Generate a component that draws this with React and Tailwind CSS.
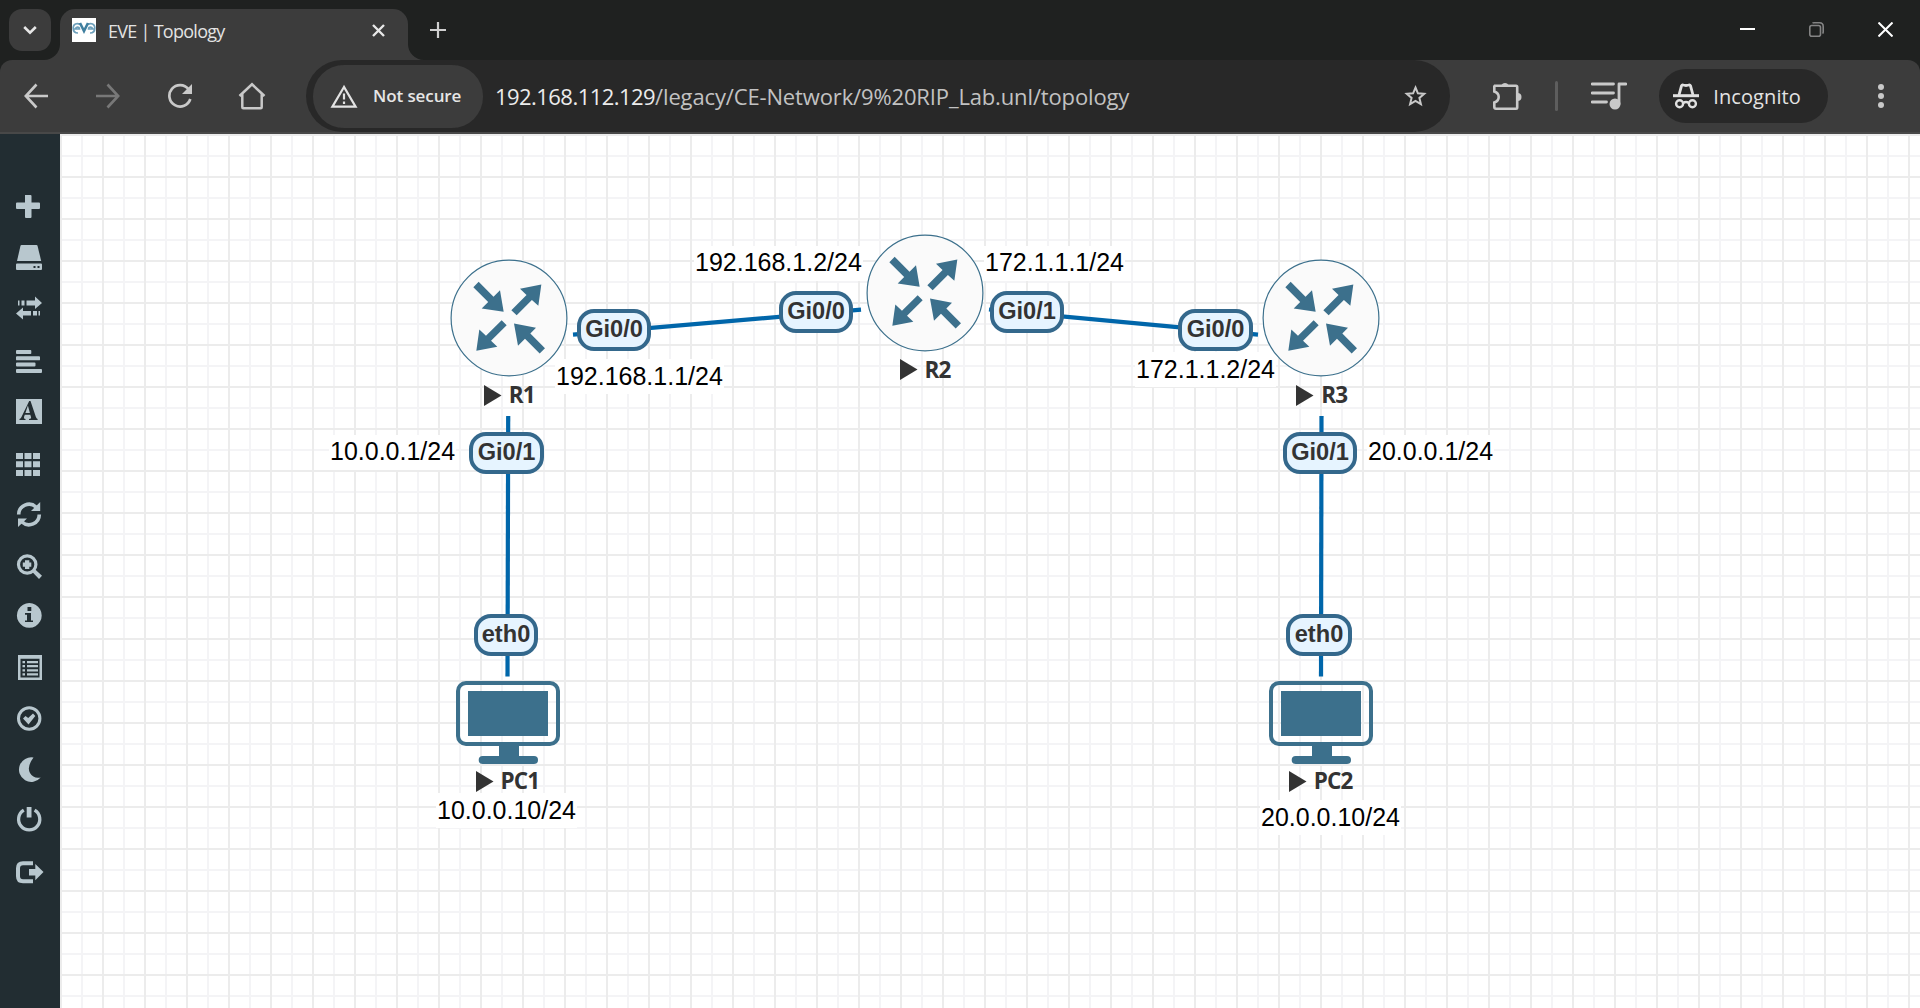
import React from "react";

const UI = "font-['Open_Sans','Noto_Sans',sans-serif]";
const ARIAL = "font-['Liberation_Sans',Arial,sans-serif]";

function TabStrip() {
  return (
    <header className="flex h-[60px] w-full items-start justify-between bg-[#1f2120] pt-[9px] pr-[27px] pl-[9px]">
      <div className="flex items-start gap-[9px]">
        <button className="flex size-[42px] items-center justify-center rounded-[13px] bg-[#3c3c3c]">
          <svg width="14" height="10" viewBox="0 0 14 10" fill="none" stroke="#e6e6e6" strokeWidth="2.6">
            <path d="M1.2 2 7 7.6 12.8 2" />
          </svg>
        </button>
        <div className="relative flex h-[51px] w-[348px] items-start justify-between rounded-t-[15px] bg-[#3c3c3c] pt-[9px] pr-[23px] pl-3">
          <svg className="absolute -left-4 bottom-0" width="16" height="16" viewBox="0 0 16 16">
            <path d="M16 0V16H0A16 16 0 0 0 16 0Z" fill="#3c3c3c" />
          </svg>
          <svg className="absolute -right-4 bottom-0" width="16" height="16" viewBox="0 0 16 16">
            <path d="M0 0V16H16A16 16 0 0 1 0 0Z" fill="#3c3c3c" />
          </svg>
          <div className="flex h-6 items-center gap-3">
            <svg width="24" height="24" viewBox="0 0 24 24" fill="none">
              <rect width="24" height="24" fill="#fff" />
              <path d="M8 6.500C5 4.500 1.200 6 1.200 10C1.200 13 3 15 6 15M2 11H7.500C7.500 8.500 4.500 8.500 3.500 10.500" stroke="#6ea0bb" strokeWidth="1.7" />
              <path d="M16 6.500C19 4.500 22.800 6 22.800 10C22.800 13 21 15 18 15M22 11H16.500C16.500 8.500 19.500 8.500 20.500 10.500" stroke="#6ea0bb" strokeWidth="1.7" />
              <path d="M8 5 12 13 16 5" stroke="#3f7f9f" strokeWidth="2.600" />
            </svg>
            <span className={`${UI} whitespace-nowrap pt-[2px] text-[18px] leading-[26px] tracking-[-0.72px] text-[#e3e3e3]`}>EVE | Topology</span>
          </div>
          <div className="flex h-6 items-center">
            <svg width="13" height="13" viewBox="0 0 13 13" stroke="#e8e8e8" strokeWidth="2.4">
              <path d="M1 1 12 12M12 1 1 12" />
            </svg>
          </div>
        </div>
        <div className="flex h-[42px] items-center pl-[13px]">
          <svg width="16" height="16" viewBox="0 0 16 16" stroke="#d0d0d0" strokeWidth="2.2">
            <path d="M8 0V16M0 8H16" />
          </svg>
        </div>
      </div>
      <div className="flex h-[41px] items-center gap-[54px]">
        <svg width="15" height="15" viewBox="0 0 15 15"><rect y="6" width="15" height="2" fill="#fff" /></svg>
        <svg width="15" height="15" viewBox="0 0 15 15" fill="none" stroke="#848484" strokeWidth="1.600">
          <rect x="0.800" y="3.500" width="10.700" height="10.700" rx="2" />
          <path d="M3.500 1.200Q4 .8 5 .8H10.500Q14.200 .8 14.200 4.500V10Q14.200 11 13.500 11.500" />
        </svg>
        <svg width="15" height="15" viewBox="0 0 15 15" stroke="#fff" strokeWidth="2">
          <path d="M.5 .5 14.500 14.500M14.500 .5 .5 14.500" />
        </svg>
      </div>
    </header>
  );
}

function Toolbar() {
  return (
    <div className="h-[74px] w-full bg-[#1f2120]">
      <div className="flex h-[74px] w-full rounded-t-[12px] border-b-2 border-[#484848] bg-[#3c3c3c]">
        <div className="flex w-[306px] shrink-0 items-center gap-12 pl-6">
          <svg width="24" height="28" viewBox="0 0 24 28" fill="none" stroke="#c9c9c9" strokeWidth="2.600">
            <path d="M24 14H2M12.500 2.500 1.800 14 12.500 25.500" />
          </svg>
          <svg width="24" height="28" viewBox="0 0 24 28" fill="none" stroke="#787878" strokeWidth="2.600">
            <path d="M0 14H22M11.500 2.500 22.200 14 11.500 25.500" />
          </svg>
          <svg width="24" height="28" viewBox="0 0 24 28" fill="none" stroke="#c9c9c9" strokeWidth="2.700">
            <path d="M20.500 7.200A10.700 10.700 0 1 0 22.300 17" />
            <path d="M24 2V12H14Z" fill="#c9c9c9" stroke="none" />
          </svg>
          <svg width="24" height="28" viewBox="2 0 24 28" fill="none" stroke="#c9c9c9" strokeWidth="2.500" className="overflow-visible">
            <path d="M1.500 14 14 2.300 26.500 14M4.300 12V25.200Q4.300 26.200 5.300 26.200H22.700Q23.700 26.200 23.700 25.200V12" />
          </svg>
        </div>
        <div className="flex h-[72px] w-[1144px] shrink-0 items-center justify-between rounded-[36px] bg-[#282828] pr-[23px] pl-[7px]">
          <div className="flex items-center gap-3">
            <div className="flex h-[63px] w-[170px] items-center gap-[15px] rounded-[31px] bg-[#3c3c3c] pl-[17px]">
              <svg width="28" height="24" viewBox="0 0 28 24" fill="none" stroke="#e3e3e3" strokeWidth="2.200">
                <path d="M14 3 2.400 22.600H25.600Z" />
                <path d="M14 9.500V15.500M14 17.500V20" />
              </svg>
              <span className={`${UI} whitespace-nowrap text-[17px] font-semibold leading-6 tracking-[-0.1px] text-[#e6e6e6]`}>Not secure</span>
            </div>
            <span className={`${UI} whitespace-nowrap text-[22px] leading-[30px] tracking-[-0.14px] text-[#c2c2c2]`}>
              <span className="tracking-[-0.55px] text-[#ececec]">192.168.112.129</span>/legacy/CE-Network/9%20RIP_Lab.unl/topology
            </span>
          </div>
          <svg width="23" height="24" viewBox="0 0 23 24" fill="none" stroke="#c9c9c9" strokeWidth="2">
            <path d="M11.500 3.500 13.900 9.300 20.200 9.800 15.400 13.900 16.900 20.100 11.500 16.800 6.100 20.100 7.600 13.900 2.800 9.800 9.100 9.300Z" />
          </svg>
        </div>
        <div className="flex h-[72px] flex-1 items-center justify-between pr-[35px] pl-[42px]">
          <svg width="30" height="32" viewBox="0 0 30 32" fill="none" stroke="#c9c9c9" strokeWidth="2.600">
            <path d="M2.800 5.800H24Q25.200 5.800 25.200 7V27.500Q25.200 28.700 24 28.700H4Q2.300 28.700 2.300 27V22.500Q6.700 21 6.700 17T2.300 11.500V6.500Z" />
            <path d="M9.500 5A4 4 0 0 1 16.500 5ZM25.500 13A4 4 0 0 1 25.500 21Z" fill="#c9c9c9" stroke="none" />
          </svg>
          <div className="h-[30px] w-[3px] rounded-full bg-[#5e5e5e]" />
          <svg width="36" height="32" viewBox="0 0 36 32" fill="none" stroke="#c9c9c9" strokeWidth="2.800">
            <path d="M1 4H22.500M1 13H22.500M1 22H15.500" strokeLinecap="round" />
            <path d="M35 4H28V24" strokeLinejoin="round" strokeLinecap="round" />
            <circle cx="24" cy="24" r="5.500" fill="#c9c9c9" stroke="none" />
          </svg>
          <div className="flex h-[54px] w-[169px] items-center gap-[14px] rounded-full bg-[#282828] pl-[14px]">
            <svg width="26" height="26" viewBox="0 0 26 26" fill="none" stroke="#e0e0e0" strokeWidth="2.400">
              <path d="M0 12.700H26" strokeWidth="3" />
              <path d="M6 12 8.500 2.800Q9 1.600 10.200 1.900L13 2.500 15.800 1.900Q17 1.600 17.500 2.800L20 12" strokeWidth="2.800" />
              <circle cx="6.600" cy="20.700" r="3.500" />
              <circle cx="19.400" cy="20.700" r="3.500" />
              <path d="M10 20.200Q13 18 16 20.200" />
            </svg>
            <span className={`${UI} whitespace-nowrap pt-[2px] text-[20px] leading-7 tracking-[0.1px] text-[#e3e3e3]`}>Incognito</span>
          </div>
          <div className="flex w-[24px] justify-end">
            <svg width="8" height="26" viewBox="0 0 8 26" fill="#c9c9c9">
              <circle cx="4" cy="4" r="3" /><circle cx="4" cy="13" r="3" /><circle cx="4" cy="22" r="3" />
            </svg>
          </div>
        </div>
      </div>
    </div>
  );
}

/* Every sidebar drawing uses a 60x51 cell. */
const sidebarIcons = [
  { name: "Add", art: <path d="M25 14h5.500q1 0 1 1v6.500h7.500q1 0 1 1v4.500q0 1-1 1h-7.500v8q0 1-1 1h-4.500q-1 0-1-1v-8h-8q-1 0-1-1v-4.500q0-1 1-1h8z" /> },
  { name: "Nodes", art: <><path d="M21.500 13h15q.8 0 1 .8l3.700 15.200H17l3.500-15.200q.2-.8 1-.8z" /><path fillRule="evenodd" d="M17 31.500h24q1 0 1 1v4.500q0 1-1 1H17q-1 0-1-1v-4.500q0-1 1-1zM33.500 34v2h2v-2zM37.500 34v2h2v-2z" /></> },
  { name: "Networks", art: <path d="M18 17.500h1.500v5H18zM21.500 17.500h3v5h-3zM26.500 17.500h8.500v-4l7 6.500-7 6v-3.500h-8.500zM40 28h-1.500v4.500H40zM37 28h-4v4.500h4zM31 28h-8v-3.500l-7 6 7 6v-4h8z" /> },
  { name: "Startup-configs", art: <path d="M17 16h13.500q.8 0 .8 1v2.200q0 .8-.8.8H17q-1 0-1-.8V17q0-1 1-1zM17 22.300h22q1 0 1 .8v2.300q0 .9-1 .9H17q-1 0-1-.9v-2.300q0-.8 1-.8zM17 28.500h17.500q1 0 1 .8v2.300q0 .9-1 .9H17q-1 0-1-.9v-2.300q0-.8 1-.8zM17 35h24q1 0 1 .8v2.300q0 .9-1 .9H17q-1 0-1-.9v-2.300q0-.8 1-.8z" /> },
  { name: "Configured objects", art: <><rect x="16" y="14" width="26" height="25" /><path fill="#222d32" fillRule="evenodd" d="M29.200 16h1.300l5.300 15.800q.6 1.900 1.800 2.200v1H29v-1q2.500-.2 2-2l-.7-2.300h-5.500l-.8 2.200q-.6 1.900 1.500 2.100v1h-6v-1q1.400-.3 2.100-2.200zM27.900 20.500l-2.500 7.500h4.500z" /></> },
  { name: "More actions", art: <path d="M16 17h7v6h-7zM24.500 17h7v6h-7zM33 17h7v6h-7zM16 25.300h7v6h-7zM24.500 25.300h7v6h-7zM33 25.300h7v6h-7zM16 34h7v6h-7zM24.500 34h7v6h-7zM33 34h7v6h-7z" /> },
  { name: "Refresh", art: <><path fill="none" stroke="currentColor" strokeWidth="3.600" d="M18.700 27.500a10.300 10.300 0 0 1 17.300-7.500M39.300 27.500a10.300 10.300 0 0 1-17.300 7.500" /><path d="M40.200 15v9H31zM18 40v-8.500h9z" /></> },
  { name: "Zoom", art: <><circle cx="27.200" cy="26.500" r="8.700" fill="none" stroke="currentColor" strokeWidth="3.200" /><path d="M25 22.300h4.300v2.200h2v4.300h-2V31H25v-2.200h-2.200v-4.300H25zM35 31.200l7 6.600-3 3.200-6.700-7z" /></> },
  { name: "Status", art: <path fillRule="evenodd" d="M29.300 14a12.400 12.400 0 1 0 .01 0zM27.500 18h3.800v4h-3.800zM25 24h6v7.500h2v1.500h-8v-1.500h2v-5.700h-2z" /> },
  { name: "Logs", art: <path fillRule="evenodd" d="M18 15h24v25H18zM20.500 18.800V37.500h19V18.800zM22.500 21H25v2.200h-2.500zM27 21h11v2.200H27zM22.500 25H25v2.200h-2.500zM27 25h11v2.200H27zM22.500 29.200H25v2.200h-2.500zM27 29.200h11v2.200H27zM22.500 33.200H25v2.200h-2.500zM27 33.200h11v2.200H27z" /> },
  { name: "Check", art: <><circle cx="29.200" cy="27.500" r="10.700" fill="none" stroke="currentColor" strokeWidth="3" /><path d="M23 27.500l2.500-2.500 2.700 2 4.800-4.500 2.300 2.500-6.800 8.500z" /></> },
  { name: "Dark mode", art: <path d="M33.500 15.500a12.300 12.300 0 1 0 7.200 20q-7.200 1.500-10.700-4.500t3.500-15.500z" /> },
  { name: "Close lab", art: <><path fill="none" stroke="currentColor" strokeWidth="3.300" d="M23.800 17.200a10.600 10.600 0 1 0 10.800 0" /><path d="M26.700 14h4.800v10.500h-4.800z" /></> },
  { name: "Logout", art: <><path fill="none" stroke="currentColor" strokeWidth="4" d="M33 19.300H23q-5 0-5 5v8q0 5 5 5h10" /><path d="M29 25h6.300v-5l8.200 8-8.200 8.200V31.500H29z" /></> },
];

function Sidebar() {
  return (
    <nav className="flex w-[60px] shrink-0 flex-col bg-[#222d32] pt-[47px] text-[#b8c7ce]">
      {sidebarIcons.map((icon) => (
        <button key={icon.name} aria-label={icon.name} className="h-[51px] w-[60px] shrink-0">
          <svg className="block overflow-visible" width="60" height="51" viewBox="0 0 60 51" fill="currentColor">{icon.art}</svg>
        </button>
      ))}
    </nav>
  );
}

function NodeName({ children }) {
  return (
    <div className="flex h-6 items-center gap-[7px] whitespace-nowrap text-[#333]">
      <svg width="18" height="21" viewBox="0 0 18 21"><path d="M0 0 17.500 10.500 0 21Z" fill="#333" /></svg>
      <span className={`${UI} text-[22.500px] font-bold leading-6 tracking-[-0.9px]`}>{children}</span>
    </div>
  );
}

function Router({ className, name }) {
  return (
    <div className={`absolute flex flex-col gap-[5px] ${className}`}>
      <svg className="size-[120px]" viewBox="-60 -60 120 120">
        <circle r="57.900" fill="#fafafa" stroke="#3c708c" strokeWidth="1.200" />
        <g transform="scale(.33333) translate(-266 -234.500)" fill="#3c708c">
          <path d="M175 126 219.500 170.500 239 151 250 216 184 206 203.500 186.500 159 142Z" />
          <path d="M273 211 318.600 165.400 299 147 363 134 354 198 334.700 180.300 289 226Z" />
          <path d="M244 241 196.900 288.100 177 269 168 333 231 321 212.100 302.900 259 256Z" />
          <path d="M374 325 330 281 347 264 281 251 293 318 314 297 358 341Z" />
        </g>
      </svg>
      <div className="pl-[35px]"><NodeName>{name}</NodeName></div>
    </div>
  );
}

function Computer({ className, name }) {
  return (
    <div className={`absolute flex flex-col gap-1 ${className}`}>
      <svg className="h-[84px] w-[104px]" viewBox="0 0 104 84" fill="#3c708c">
        <rect x="2" y="2" width="100" height="61" rx="8" fill="none" stroke="#3c708c" strokeWidth="4" />
        <rect x="12" y="10" width="80" height="45" />
        <rect x="43" y="64" width="20" height="12" />
        <rect x="22.700" y="75" width="59.300" height="8" rx="4" />
      </svg>
      <div className="pl-[19.500px]"><NodeName>{name}</NodeName></div>
    </div>
  );
}

function Port({ className, children }) {
  return (
    <div className={`absolute flex h-[42px] items-center justify-center rounded-[17px] border-4 border-[#34688c] bg-[#e6f4ff] ${ARIAL} pb-[3px] text-[23.600px] font-bold leading-6 text-[#333] ${className}`}>
      {children}
    </div>
  );
}

function Address({ className, children }) {
  return (
    <div className={`absolute h-[35px] whitespace-nowrap bg-white px-[1px] ${ARIAL} text-[25px] text-black ${className}`}>
      {children}
    </div>
  );
}

/* Topology canvas: items are placed from the canvas origin. */
function Canvas() {
  return (
    <main className="relative min-w-0 flex-1 overflow-hidden bg-white">
      <svg className="absolute inset-0" width="1860" height="874">
        <defs>
          <pattern id="grid" width="42" height="42" patternUnits="userSpaceOnUse">
            <rect x="21" width="2" height="42" fill="#f4f4f6" />
            <rect y="21" width="42" height="2" fill="#f4f4f6" />
            <rect width="2" height="42" fill="#ececec" />
            <rect width="42" height="2" fill="#ececec" />
          </pattern>
        </defs>
        <rect width="1860" height="874" fill="url(#grid)" />
        <g stroke="#0066aa" strokeWidth="4.200">
          <path d="M513 200.700 801 175.700" />
          <path d="M929 175.500 1198 200.700" />
          <path d="M448.200 282 447.500 542.500" />
          <path d="M1261.500 282 1261 542.500" />
        </g>
      </svg>

      <Address className="left-[634px] top-[112px] leading-[33px]">192.168.1.2/24</Address>
      <Address className="left-[924px] top-[112px] leading-[33px]">172.1.1.1/24</Address>
      <Address className="left-[495px] top-[225px] leading-[35px]">192.168.1.1/24</Address>
      <Address className="left-[1075px] top-[218px] leading-[35px]">172.1.1.2/24</Address>
      <Address className="left-[269px] top-[301px] leading-[33px]">10.0.0.1/24</Address>
      <Address className="left-[1307px] top-[301px] leading-[33px]">20.0.0.1/24</Address>
      <Address className="left-[376px] top-[659px] leading-[35px]">10.0.0.10/24</Address>
      <Address className="left-[1200px] top-[666px] leading-[35px]">20.0.0.10/24</Address>

      <Router name="R1" className="left-[388.700px] top-[124.200px]" />
      <Router name="R2" className="left-[804.600px] top-[98.700px]" />
      <Router name="R3" className="left-[1201.300px] top-[124.200px]" />
      <Computer name="PC1" className="left-[396px] top-[547px]" />
      <Computer name="PC2" className="left-[1209.300px] top-[547px]" />

      <Port className="left-[517px] top-[175px] w-[74px]">Gi0/0</Port>
      <Port className="left-[719px] top-[157px] w-[74px]">Gi0/0</Port>
      <Port className="left-[930px] top-[157px] w-[74px]">Gi0/1</Port>
      <Port className="left-[1118px] top-[175px] w-[75px]">Gi0/0</Port>
      <Port className="left-[409px] top-[298px] w-[75px]">Gi0/1</Port>
      <Port className="left-[1223px] top-[298px] w-[74px]">Gi0/1</Port>
      <Port className="left-[414px] top-[480px] w-[64px]">eth0</Port>
      <Port className="left-[1226px] top-[480px] w-[66px]">eth0</Port>
    </main>
  );
}

export default function App() {
  return (
    <div className="flex h-[1008px] w-[1920px] flex-col overflow-hidden">
      <TabStrip />
      <Toolbar />
      <div className="flex h-[874px] w-full">
        <Sidebar />
        <Canvas />
      </div>
    </div>
  );
}
